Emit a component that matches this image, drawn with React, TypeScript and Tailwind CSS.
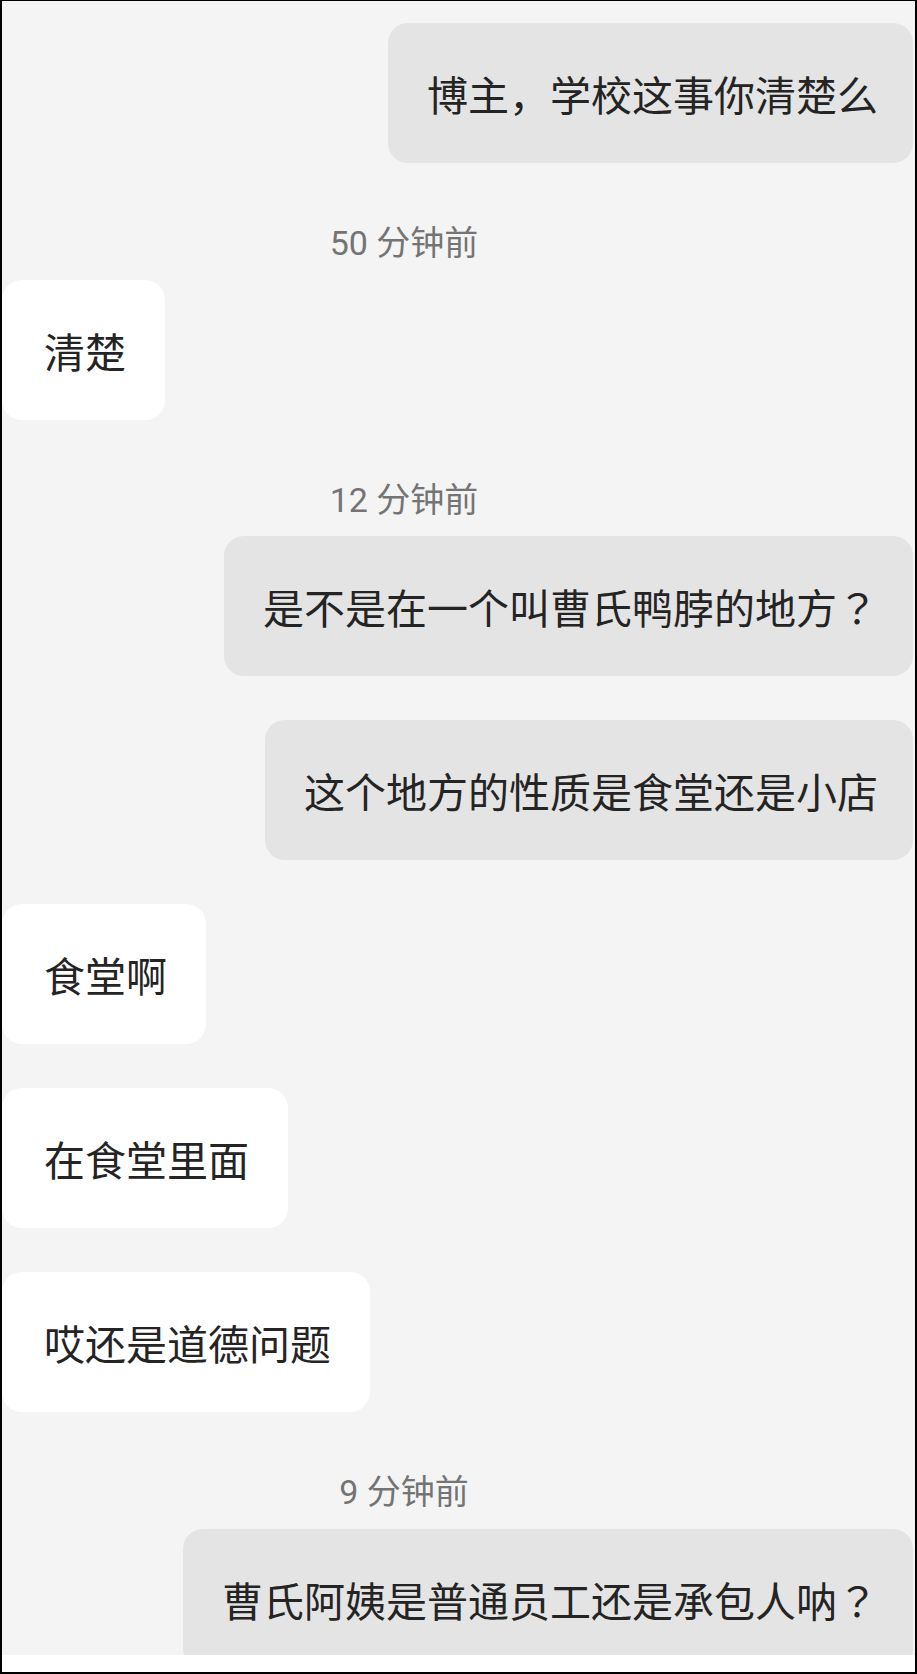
import React from 'react';

type Item =
    | { kind: 'time'; text: string }
    | { kind: 'me'; text: string; gap: string }
    | { kind: 'them'; text: string; gap: string };

const items: Item[] = [
    { kind: 'me', text: '博主，学校这事你清楚么', gap: 'mt-0' },
    { kind: 'time', text: '50 分钟前' },
    { kind: 'them', text: '清楚', gap: 'mt-[17px]' },
    { kind: 'time', text: '12 分钟前' },
    { kind: 'me', text: '是不是在一个叫曹氏鸭脖的地方？', gap: 'mt-[16px]' },
    { kind: 'me', text: '这个地方的性质是食堂还是小店', gap: 'mt-[44px]' },
    { kind: 'them', text: '食堂啊', gap: 'mt-[44px]' },
    { kind: 'them', text: '在食堂里面', gap: 'mt-[44px]' },
    { kind: 'them', text: '哎还是道德问题', gap: 'mt-[44px]' },
    { kind: 'time', text: '9 分钟前' },
    { kind: 'me', text: '曹氏阿姨是普通员工还是承包人呐？', gap: 'mt-[17px]' },
];

const cjk = "font-['Noto_Sans_CJK_SC',sans-serif]";

// the full-width question mark sits centred in its box in the screenshot
function Msg({ text }: { text: string }) {
    return (
        <>
            {text.split(/(？)/).map((part, i) =>
                part === '？' ? (
                    <span key={i} className="font-['Noto_Sans_CJK_TC',sans-serif]">{part}</span>
                ) : (
                    <span key={i}>{part}</span>
                )
            )}
        </>
    );
}

export default function App() {
    return (
        <div className="w-[917px] h-[1674px] bg-white border-black border-t border-l-2 border-r-2 border-b-2 flex flex-col">
            {/* chat area */}
            <div className="h-[1654px] bg-[#f4f4f4] overflow-hidden pt-[22px] flex flex-col">
                {items.map((item, i) => {
                    if (item.kind === 'time') {
                        return (
                            <div
                                key={i}
                                className="mt-[60px] w-[804px] text-center text-[34px] leading-[40px] text-[#747474] font-['Roboto','Noto_Sans_CJK_SC',sans-serif]"
                            >
                                {item.text}
                            </div>
                        );
                    }
                    if (item.kind === 'me') {
                        return (
                            <div key={i} className={`${item.gap} flex justify-end pr-[2px]`}>
                                <div className={`${cjk} h-[140px] shrink-0 flex items-center bg-[#e4e4e4] rounded-[20px] pl-[39px] pr-[35px] text-[41px] leading-[60px] text-[#242424] whitespace-nowrap`}>
                                    <Msg text={item.text} />
                                </div>
                            </div>
                        );
                    }
                    return (
                        <div key={i} className={`${item.gap} flex justify-start`}>
                            <div className={`${cjk} h-[140px] flex items-center bg-white rounded-[20px] pl-[42px] pr-[39px] text-[41px] leading-[60px] text-[#242424] whitespace-nowrap`}>
                                <Msg text={item.text} />
                            </div>
                        </div>
                    );
                })}
            </div>
            <div className="flex-1 bg-white" />
        </div>
    );
}
